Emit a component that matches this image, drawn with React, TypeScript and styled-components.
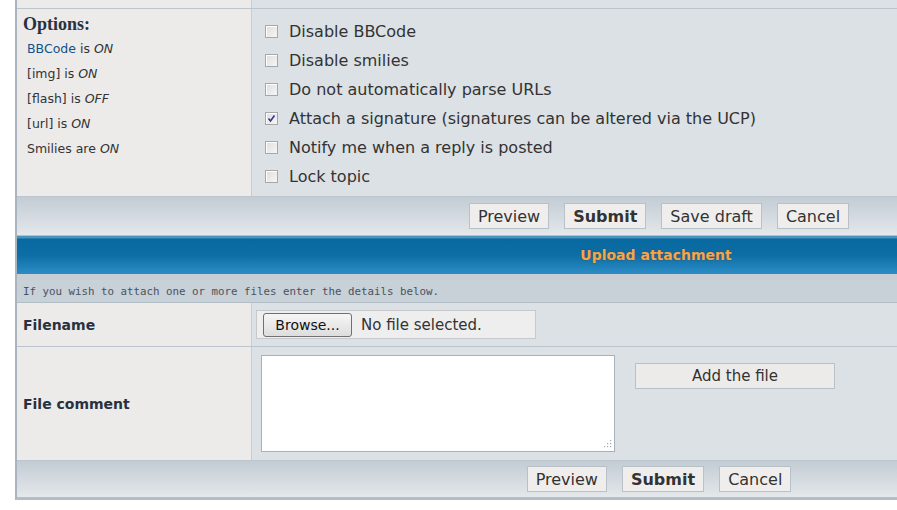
import React from 'react'
import styled, { createGlobalStyle } from 'styled-components'

const GlobalStyle = createGlobalStyle`
  html, body {
    margin: 0;
    padding: 0;
    background: #ffffff;
    overflow: hidden;
  }
  body {
    font-family: 'DejaVu Sans', Verdana, sans-serif;
    color: #333333;
  }
`

const Page = styled.div`
  padding-left: 15px;
  width: 1290px;
`

const Panel = styled.div`
  border-left: 2px solid #a9b4be;
  border-bottom: 2px solid #b3bdc6;
`

const Row = styled.div<{ $height: number }>`
  display: grid;
  grid-template-columns: 235px 1fr;
  height: ${p => p.$height}px;
  border-bottom: 1px solid #bcc5ce;
`

const LeftCell = styled.div<{ $center?: boolean }>`
  background: #ecebea;
  border-right: 1px solid #c5cdd5;
  padding: 5px 6px 0 6px;
  display: flex;
  flex-direction: column;
  justify-content: ${p => (p.$center ? 'center' : 'flex-start')};
  ${p => (p.$center ? 'padding-top: 0;' : '')}
`

const RightCell = styled.div`
  background: #dce1e5;
`

const OptionsTitle = styled.div`
  font-family: 'Liberation Serif', 'DejaVu Serif', serif;
  font-weight: bold;
  font-size: 18px;
  line-height: 20px;
  color: #28313f;
  margin-bottom: 2px;
`

const OptionLine = styled.div`
  font-size: 12.5px;
  line-height: 25px;
  padding-left: 4px;
  color: #333;

  em {
    font-style: italic;
  }
`

const BBLink = styled.span`
  color: #105289;
`

const CheckList = styled.div`
  display: flex;
  flex-direction: column;
  padding: 8px 0 0 13px;
`

const CheckRow = styled.label`
  display: flex;
  align-items: center;
  gap: 11px;
  height: 29px;
  font-size: 16px;
  color: #333;
`

const Box = styled.span`
  width: 11px;
  height: 11px;
  border: 1px solid #a7a7a7;
  background: linear-gradient(135deg, #dedede, #f6f6f6);
  display: flex;
  align-items: center;
  justify-content: center;
  box-shadow: inset 1px 1px 0 #ffffff;
`

const ButtonBar = styled.div<{ $height: number }>`
  height: ${p => p.$height}px;
  display: flex;
  justify-content: center;
  align-items: center;
  gap: 15px;
  padding-right: 4px;
  background: linear-gradient(to bottom, #c3ccd4, #dee3e7 85%, #e6e9ec);
  border-bottom: 1px solid #b5bfc8;
`

const Button = styled.button<{ $bold?: boolean }>`
  font-family: 'DejaVu Sans', Verdana, sans-serif;
  font-size: 16px;
  font-weight: ${p => (p.$bold ? 'bold' : 'normal')};
  color: #333;
  background: #efeeed;
  border: 1px solid #b8c0c8;
  height: 26px;
  padding: 0 8px;
  margin: 0;
`

const BlueHeader = styled.div`
  height: 38px;
  background: linear-gradient(to bottom, #4b92bd 0, #4b92bd 2px, #0868a0 3px, #0d6ea6 50%, #2c8dc6 100%);
  display: flex;
  align-items: center;
  justify-content: center;
  padding-right: 10px;
  font-weight: bold;
  font-size: 14px;
  color: #f4a64a;
  text-shadow: 0 0 2px #3d4a55;
  border-bottom: 6px solid #c8ced4;
`

const InfoRow = styled.div`
  height: 22px;
  background: #c8d0d8;
  font-family: 'DejaVu Sans Mono', 'Liberation Mono', monospace;
  font-size: 10.8px;
  color: #4a5360;
  display: flex;
  align-items: center;
  padding-left: 6px;
  border-bottom: 1px solid #b3bdc6;
`

const Label = styled.div`
  font-weight: bold;
  font-size: 14px;
  color: #28313f;
`

const FileBox = styled.div`
  margin: 7px 0 0 4px;
  width: 280px;
  height: 29px;
  box-sizing: border-box;
  background: #eeeeee;
  border: 1px solid #c5c9cc;
  display: flex;
  align-items: center;
  gap: 9px;
  padding-left: 6px;
  font-size: 15px;
  color: #333;
`

const BrowseButton = styled.button`
  font-family: 'DejaVu Sans', Verdana, sans-serif;
  font-size: 14px;
  color: #111;
  height: 24px;
  width: 89px;
  border: 1px solid #707070;
  border-radius: 3px;
  background: linear-gradient(to bottom, #f6f6f6, #dddddd);
  padding: 0;
`

const CommentCell = styled.div`
  background: #dce1e5;
  display: flex;
  gap: 20px;
  padding: 8px 0 0 9px;
`

const AreaWrap = styled.div`
  position: relative;
  width: 354px;
  height: 97px;
`

const TextArea = styled.textarea`
  width: 100%;
  height: 100%;
  box-sizing: border-box;
  border: 1px solid #a8b1ba;
  background: #ffffff;
  resize: none;
  margin: 0;
`

const Grip = styled.svg`
  position: absolute;
  right: 3px;
  bottom: 4px;
`

const AddButton = styled.button`
  font-family: 'DejaVu Sans', Verdana, sans-serif;
  font-size: 15px;
  color: #333;
  background: #ecebea;
  border: 1px solid #b8c0c8;
  width: 200px;
  height: 26px;
  margin-top: 8px;
  padding: 0;
`

const options: { label: string; checked?: boolean }[] = [
  { label: 'Disable BBCode' },
  { label: 'Disable smilies' },
  { label: 'Do not automatically parse URLs' },
  { label: 'Attach a signature (signatures can be altered via the UCP)', checked: true },
  { label: 'Notify me when a reply is posted' },
  { label: 'Lock topic' },
]

const Checkbox = ({ checked }: { checked?: boolean }) => (
  <Box>
    {checked && (
      <svg width="9" height="9" viewBox="0 0 9 9">
        <path d="M1.5 4.5 L3.5 7 L7.5 1.5" stroke="#2b3a8c" strokeWidth="1.6" fill="none" />
      </svg>
    )}
  </Box>
)

const App = (): JSX.Element => (
  <Page>
    <GlobalStyle />
    <Panel>
      <Row $height={8}>
        <LeftCell />
        <RightCell />
      </Row>
      <Row $height={187}>
        <LeftCell>
          <OptionsTitle>Options:</OptionsTitle>
          <OptionLine>
            <BBLink>BBCode</BBLink> is <em>ON</em>
          </OptionLine>
          <OptionLine>
            [img] is <em>ON</em>
          </OptionLine>
          <OptionLine>
            [flash] is <em>OFF</em>
          </OptionLine>
          <OptionLine>
            [url] is <em>ON</em>
          </OptionLine>
          <OptionLine>
            Smilies are <em>ON</em>
          </OptionLine>
        </LeftCell>
        <RightCell>
          <CheckList>
            {options.map(o => (
              <CheckRow key={o.label}>
                <Checkbox checked={o.checked} />
                {o.label}
              </CheckRow>
            ))}
          </CheckList>
        </RightCell>
      </Row>
      <ButtonBar $height={38}>
        <Button>Preview</Button>
        <Button $bold>Submit</Button>
        <Button>Save draft</Button>
        <Button>Cancel</Button>
      </ButtonBar>
      <BlueHeader>Upload attachment</BlueHeader>
      <InfoRow>If you wish to attach one or more files enter the details below.</InfoRow>
      <Row $height={43}>
        <LeftCell $center>
          <Label>Filename</Label>
        </LeftCell>
        <RightCell>
          <FileBox>
            <BrowseButton>Browse...</BrowseButton>
            No file selected.
          </FileBox>
        </RightCell>
      </Row>
      <Row $height={113}>
        <LeftCell $center>
          <Label>File comment</Label>
        </LeftCell>
        <CommentCell>
          <AreaWrap>
            <TextArea />
            <Grip width="9" height="9" viewBox="0 0 9 9">
              <g fill="#a0a8b0">
                <rect x="7" y="1" width="1.2" height="1.2" />
                <rect x="4" y="4" width="1.2" height="1.2" />
                <rect x="7" y="4" width="1.2" height="1.2" />
                <rect x="1" y="7" width="1.2" height="1.2" />
                <rect x="4" y="7" width="1.2" height="1.2" />
                <rect x="7" y="7" width="1.2" height="1.2" />
              </g>
            </Grip>
          </AreaWrap>
          <AddButton>Add the file</AddButton>
        </CommentCell>
      </Row>
      <ButtonBar $height={36}>
        <Button>Preview</Button>
        <Button $bold>Submit</Button>
        <Button>Cancel</Button>
      </ButtonBar>
    </Panel>
  </Page>
)

export default App
